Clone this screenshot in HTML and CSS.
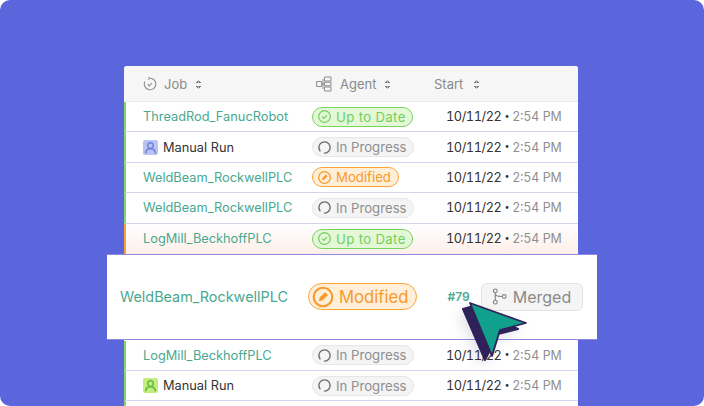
FILE: index.html
```html
<!DOCTYPE html>
<html>
    <head>
        <meta charset="UTF-8">
        <link rel="stylesheet" href="styles.css">
    </head>
    <body>
        <svg class="defs" width="0" height="0">
            <symbol id="icoCheck" viewBox="0 0 16 16"><circle cx="8" cy="8" r="6.2" fill="none" stroke="currentColor" stroke-width="1.3"/><path d="M5.4 8.2l1.9 1.9 3.4-3.6" fill="none" stroke="currentColor" stroke-width="1.3"/></symbol>
            <symbol id="icoSpin" viewBox="0 0 16 16"><path d="M3.2 11.6A6 6 0 1 1 8 14" fill="none" stroke="#6f6f6f" stroke-width="1.5" stroke-linecap="round"/></symbol>
            <symbol id="icoEdit" viewBox="0 0 16 16"><circle cx="8" cy="8" r="6.2" fill="none" stroke="currentColor" stroke-width="1.4"/><path d="M5.2 10.8l.7-2.6 3.6-3.4 1.8 1.8-3.5 3.5z" fill="currentColor"/></symbol>
            <symbol id="icoUser" viewBox="0 0 15 15"><circle cx="7.5" cy="5.6" r="2.8" fill="none" stroke="currentColor" stroke-width="1.4"/><path d="M2.6 13.4c.2-3 2-4.6 4.9-4.6s4.700 1.600 4.900 4.600" fill="none" stroke="currentColor" stroke-width="1.600"/></symbol>
        </svg>

        <div class="stage">
            <div class="jobTable">
                <div class="row headRow">
                    <div class="headCell">
                        <svg class="headIco" viewBox="0 0 14 14"><path d="M7 1.200A5.800 5.800 0 1 1 1.800 4.500" fill="none" stroke="currentColor" stroke-width="1.100"/><path d="M5 3l2-1.800L5.200 0" fill="none" stroke="currentColor" stroke-width="1"/><path d="M4.700 7.200l1.700 1.800 2.400-3" fill="none" stroke="currentColor" stroke-width="1.100"/></svg>
                        Job <span class="sorter"></span>
                    </div>
                    <div class="headCell">
                        <svg class="headIco wide" viewBox="0 0 16 16"><path d="M.6 5.500h5v5h-5zM8.500 1h6.500v4H8.500zM8.500 6.200h6.500v3.600H8.500zM8.500 11h6.500v4H8.500zM5.600 8h2.900M7 3v10" fill="none" stroke="currentColor" stroke-width="1"/></svg>
                        Agent <span class="sorter"></span>
                    </div>
                    <div class="headCell startHead">Start <span class="sorter"></span></div>
                </div>

                <div class="row okRow">
                    <div class="jobName">ThreadRod_FanucRobot</div>
                    <div><span class="pill pillGreen"><svg class="pillIco"><use href="#icoCheck"/></svg>Up to Date</span></div>
                    <div class="when"><i>10/11/22</i><b>•</b><span>2:54 PM</span></div>
                </div>
                <div class="row okRow">
                    <div class="jobName manual"><span class="avatar avatarBlue"><svg><use href="#icoUser"/></svg></span>Manual Run</div>
                    <div><span class="pill pillGrey"><svg class="pillIco"><use href="#icoSpin"/></svg>In Progress</span></div>
                    <div class="when"><i>10/11/22</i><b>•</b><span>2:54 PM</span></div>
                </div>
                <div class="row okRow">
                    <div class="jobName">WeldBeam_RockwellPLC</div>
                    <div><span class="pill pillOrange"><svg class="pillIco"><use href="#icoEdit"/></svg>Modified</span></div>
                    <div class="when"><i>10/11/22</i><b>•</b><span>2:54 PM</span></div>
                </div>
                <div class="row okRow">
                    <div class="jobName">WeldBeam_RockwellPLC</div>
                    <div><span class="pill pillGrey"><svg class="pillIco"><use href="#icoSpin"/></svg>In Progress</span></div>
                    <div class="when"><i>10/11/22</i><b>•</b><span>2:54 PM</span></div>
                </div>
                <div class="row warnRow">
                    <div class="jobName">LogMill_BeckhoffPLC</div>
                    <div><span class="pill pillGreen"><svg class="pillIco"><use href="#icoCheck"/></svg>Up to Date</span></div>
                    <div class="when"><i>10/11/22</i><b>•</b><span>2:54 PM</span></div>
                </div>

                <div class="bigRow">
                    <div class="bigName">WeldBeam_RockwellPLC</div>
                    <div><span class="pill pillOrange pillBig"><svg class="pillIco"><use href="#icoEdit"/></svg>Modified</span></div>
                    <div class="prNum">#79</div>
                    <div class="mergedBtn">
                        <svg class="mergeIco" viewBox="0 0 16 18"><circle cx="3.500" cy="3" r="2" fill="none" stroke="currentColor" stroke-width="1.300"/><circle cx="3.500" cy="15" r="2" fill="none" stroke="currentColor" stroke-width="1.300"/><circle cx="13" cy="9" r="2" fill="none" stroke="currentColor" stroke-width="1.300"/><path d="M3.500 5v8M3.500 6c0 2.500 2.500 3 7.500 3" fill="none" stroke="currentColor" stroke-width="1.300"/></svg>
                        Merged
                    </div>
                </div>

                <div class="row okRow">
                    <div class="jobName">LogMill_BeckhoffPLC</div>
                    <div><span class="pill pillGrey"><svg class="pillIco"><use href="#icoSpin"/></svg>In Progress</span></div>
                    <div class="when"><i>10/11/22</i><b>•</b><span>2:54 PM</span></div>
                </div>
                <div class="row okRow">
                    <div class="jobName manual"><span class="avatar avatarGreen"><svg><use href="#icoUser"/></svg></span>Manual Run</div>
                    <div><span class="pill pillGrey"><svg class="pillIco"><use href="#icoSpin"/></svg>In Progress</span></div>
                    <div class="when"><i>10/11/22</i><b>•</b><span>2:54 PM</span></div>
                </div>
                <div class="row okRow">
                    <div class="jobName"></div>
                    <div><span class="pill pillGreen"></span></div>
                    <div class="when"></div>
                </div>
            </div>

            <svg class="cursor" viewBox="0 0 72 68">
                <path d="M5 9L12 7 60 29 40 34 27 60z" fill="#2f2159" stroke="#2f2159" stroke-width="2" stroke-linejoin="round"/>
                <path d="M12 3L68 23 42 30 34 56z" fill="#10a08c" stroke="#2f2159" stroke-width="1.800" stroke-linejoin="round"/>
            </svg>
        </div>
    </body>
</html>
```

FILE: styles.css
```css
html, body {
    margin: 0;
    padding: 0;
    background: #ffffff;
}

.defs {
    position: absolute;
}

.stage {
    position: relative;
    width: 704px;
    height: 406px;
    overflow: hidden;
    background: #5b66dc;
    border-radius: 10px;
    padding: 66px 126px 0 124px;
    box-sizing: border-box;
    font-family: Inter, "Liberation Sans", sans-serif;
    font-size: 13px;
}

.jobTable {
    background: #ffffff;
    border-radius: 3px 3px 0 0;
}

.row {
    display: grid;
    grid-template-columns: 169px 134px 1fr;
    align-items: center;
    height: 29.400px;
    padding-left: 17px;
    border-bottom: 1px solid #d6d3f0;
    background: #ffffff;
}

.okRow {
    border-left: 2px solid #7fd96b;
}

.warnRow {
    border-left: 2px solid #f7a23b;
    background: linear-gradient(#ffffff, #fdeee8);
    border-bottom: 0;
    height: 30px;
}

.headRow {
    height: 35px;
    padding-left: 19px;
    background: #f6f6f6;
    border-bottom: 1px solid #ececec;
    border-radius: 3px 3px 0 0;
    color: #8a8a8a;
}

.headCell {
    display: flex;
    align-items: center;
    gap: 6px;
    font-size: 13px;
    padding-top: 1px;
}

.startHead {
    margin-left: -12px;
}

.startHead .sorter {
    margin-left: 5px;
}

.headIco {
    width: 14px;
    height: 14px;
    margin-right: 1px;
    color: #8d8d8d;
}

.headIco.wide {
    width: 16px;
    height: 16px;
    margin-left: 4px;
    margin-right: 2px;
}

.sorter {
    display: inline-block;
    width: 5px;
    height: 9px;
    margin-left: 3px;
    background:
        linear-gradient(135deg, transparent 50%, #7a7a7a 50%) 0 0 / 2.500px 3px no-repeat,
        linear-gradient(225deg, transparent 50%, #7a7a7a 50%) 100% 0 / 2.500px 3px no-repeat,
        linear-gradient(45deg, transparent 50%, #7a7a7a 50%) 0 100% / 2.500px 3px no-repeat,
        linear-gradient(315deg, transparent 50%, #7a7a7a 50%) 100% 100% / 2.500px 3px no-repeat;
}

.jobName {
    color: #4aa890;
    font-size: 12.800px;
    white-space: nowrap;
}

.manual {
    display: flex;
    align-items: center;
    gap: 5px;
    color: #333333;
}

.avatar {
    display: inline-flex;
    width: 15px;
    height: 15px;
    border-radius: 2px;
}

.avatar svg {
    width: 15px;
    height: 15px;
}

.avatarBlue {
    background: #b9c4f2;
    color: #6f83dc;
}

.avatarGreen {
    background: #c3ee7c;
    color: #63b84a;
}

.pill {
    display: inline-flex;
    align-items: center;
    gap: 4px;
    height: 20px;
    padding: 0 6px 0 4px;
    box-sizing: border-box;
    border-radius: 10px;
    border: 1px solid;
    font-size: 13.200px;
    white-space: nowrap;
    vertical-align: middle;
}

.pillIco {
    width: 15px;
    height: 15px;
}

.pillGreen {
    background: #e4f8d8;
    border-color: #79d463;
    color: #72cf5c;
    letter-spacing: .35px;
}

.pillGrey {
    background: #f4f4f4;
    border-color: #e6e6e6;
    color: #8f8f8f;
}

.pillOrange {
    background: #ffeed8;
    border-color: #f9a637;
    color: #f79a2a;
    padding-right: 7px;
}

.when {
    display: flex;
    align-items: center;
    color: #333333;
    font-size: 12.400px;
    white-space: nowrap;
}

.when i {
    font-style: normal;
    font-size: 12.800px;
    font-variant-numeric: tabular-nums;
    letter-spacing: -.45px;
}

.when b {
    font-weight: 400;
    font-size: 9px;
    margin: -3px 3px 0 3px;
}

.when span {
    color: #8f8f8f;
}

.bigRow {
    display: flex;
    align-items: center;
    height: 84px;
    margin: 1px -19px 2px -17px;
    padding-left: 13px;
    background: #ffffff;
    box-shadow: 0 -1px 0 0 #8d8ae0, 0 1px 0 0 #8d8ae0;
    position: relative;
}

.bigName {
    width: 188px;
    color: #4aa890;
    font-size: 14.400px;
    white-space: nowrap;
}

.pillBig {
    height: 27px;
    border-radius: 14px;
    padding: 0 7px 0 2px;
    gap: 4px;
    font-size: 16.700px;
    border-width: 1.500px;
}

.pillBig .pillIco {
    width: 24px;
    height: 24px;
}

.prNum {
    margin-left: 31px;
    color: #4aa890;
    font-size: 12px;
    font-weight: 600;
}

.mergedBtn {
    display: flex;
    align-items: center;
    gap: 6px;
    margin-left: 11px;
    width: 102px;
    height: 28px;
    padding-left: 10px;
    box-sizing: border-box;
    background: #f5f5f5;
    border: 1px solid #e2e2e2;
    border-radius: 6px;
    color: #8a8a8a;
    font-size: 16px;
}

.mergeIco {
    width: 15px;
    height: 17px;
}

.cursor {
    position: absolute;
    left: 458px;
    top: 300px;
    width: 72px;
    height: 68px;
    filter: drop-shadow(-4px 5px 6px rgba(40, 30, 90, .12));
}
```
